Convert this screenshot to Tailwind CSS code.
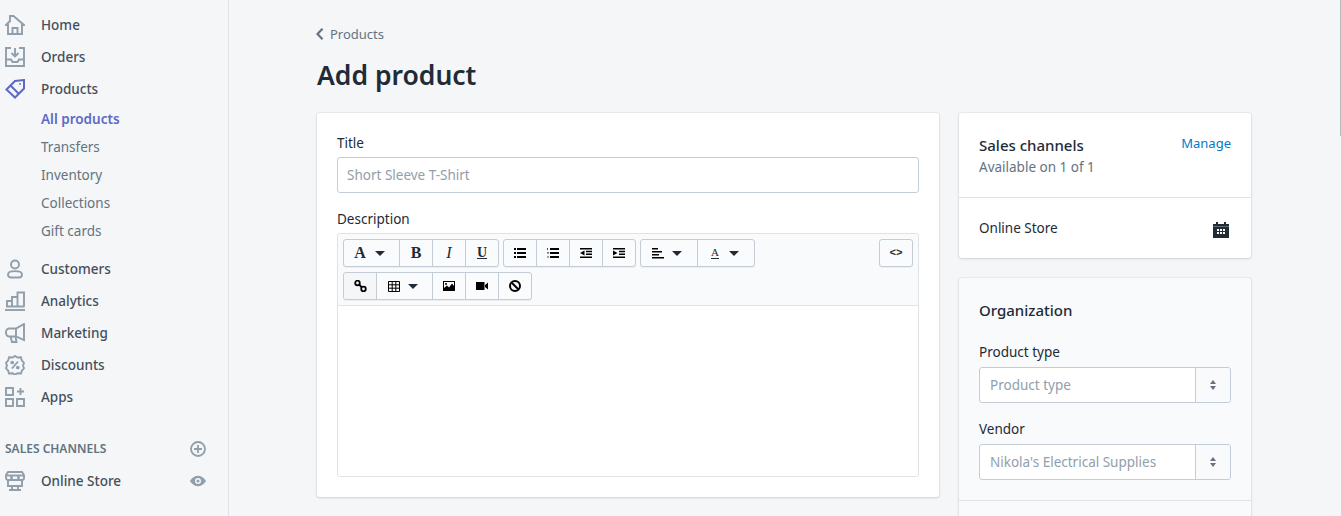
<!DOCTYPE html>
<html lang="en">
<head>
    <meta charset="UTF-8">
    <meta name="viewport" content="width=device-width, initial-scale=1.0">
    <title>Add product</title>
    <script src="https://cdn.jsdelivr.net/npm/@tailwindcss/browser@4"></script>
</head>
<body class="h-[516px] overflow-hidden bg-[#f4f6f8] text-[#212b36] font-['Noto_Sans','Open_Sans',sans-serif] text-[13.5px] leading-[20px]">
<div class="flex h-[516px]">
    <!-- sidebar -->
    <aside class="w-[229px] shrink-0 border-r border-[#dfe3e8] pt-[9px] text-[#454f5b] font-medium">
        <a class="flex items-center h-[32px] pl-[5px]">
            <svg class="w-[20px] h-[20px] mr-[16px]" viewBox="0 0 20 20" fill="none" stroke="#919eab" stroke-width="1.900"><path d="M1 10 5 6V1h3.500L19 10h-2v9H3v-9Z"/><path d="M7.500 19v-6h5v6"/></svg>
            <span>Home</span>
        </a>
        <a class="flex items-center h-[32px] pl-[5px]">
            <svg class="w-[20px] h-[20px] mr-[16px]" viewBox="0 0 20 20" fill="none" stroke="#919eab" stroke-width="1.900"><path d="M6 1H1v18h18V1h-5"/><path d="M1 12.500h5l1.500 2.500h5l1.500-2.500h5"/><path d="M10 1v8.500M6.500 6l3.500 3.500L13.500 6"/></svg>
            <span>Orders</span>
        </a>
        <a class="flex items-center h-[32px] pl-[5px]">
            <svg class="w-[20px] h-[20px] mr-[16px]" viewBox="0 0 20 20" fill="none" stroke="#5c6ac4" stroke-width="2"><path d="M1.500 10.500 10 2l9-1v8.500L10 18.500Z"/><path d="m5.500 6.500 8 8"/><circle cx="15" cy="5" r=".5" fill="#5c6ac4" stroke-width="1"/></svg>
            <span>Products</span>
        </a>
        <div class="pl-[41px] text-[#637381] font-normal">
            <a class="flex items-center h-[28px] font-semibold text-[#5c6ac4]">All products</a>
            <a class="flex items-center h-[28px]">Transfers</a>
            <a class="flex items-center h-[28px]">Inventory</a>
            <a class="flex items-center h-[28px]">Collections</a>
            <a class="flex items-center h-[28px]">Gift cards</a>
        </div>
        <div class="pt-[8px]">
            <a class="flex items-center h-[32px] pl-[5px]">
                <svg class="w-[20px] h-[20px] mr-[16px]" viewBox="0 0 20 20" fill="none" stroke="#919eab" stroke-width="1.900"><circle cx="10" cy="5.500" r="4"/><path d="M3 15.500c0-4.500 14-4.500 14 0 0 2-1.500 3-3 3H6c-1.500 0-3-1-3-3Z"/></svg>
                <span>Customers</span>
            </a>
            <a class="flex items-center h-[32px] pl-[5px]">
                <svg class="w-[20px] h-[20px] mr-[16px]" viewBox="0 0 20 20" fill="none" stroke="#919eab" stroke-width="1.900"><path d="M0 19h20"/><path d="M2 15.500V10h5v5.500M7 15.500V6h5.500v9.500M12.500 15.500V1.500H19v14M1 15.500h18.500"/></svg>
                <span>Analytics</span>
            </a>
            <a class="flex items-center h-[32px] pl-[5px]">
                <svg class="w-[20px] h-[20px] mr-[16px]" viewBox="0 0 20 20" fill="none" stroke="#919eab" stroke-width="1.900"><path d="M19 1v16l-8-3.500H4C2 13.500 1 11.500 1 9.500s1-4 3-4h7Z"/><path d="M11 5.500v8M5.500 13.500 7 19h4.500l-1-5.500"/></svg>
                <span>Marketing</span>
            </a>
            <a class="flex items-center h-[32px] pl-[5px]">
                <svg class="w-[20px] h-[20px] mr-[16px]" viewBox="0 0 20 20" fill="none" stroke="#919eab" stroke-width="1.900"><path d="m10 1 2.500 1.500 3.500-.3.800 3.200L19 8l-1 2.500 1 2.800-2.200 2.400-.8 2.800-3.500-.2L10 19.500l-2.500-1.200-3.500.2-.8-2.800L1 13.300 2 10.500 1 8l2.200-2.600.8-3.200 3.500.3Z"/><path d="m7 13.500 6-7"/><circle cx="7.200" cy="7.500" r=".9"/><circle cx="12.800" cy="12.500" r=".9"/></svg>
                <span>Discounts</span>
            </a>
            <a class="flex items-center h-[32px] pl-[5px]">
                <svg class="w-[20px] h-[20px] mr-[16px]" viewBox="0 0 20 20" fill="none" stroke="#919eab" stroke-width="1.900"><path d="M1 1h7v7H1zM1 12h7v7H1zM12 12h7v7h-7zM15.500 1v7M12 4.500h7"/></svg>
                <span>Apps</span>
            </a>
        </div>
        <div class="flex items-center justify-between h-[20px] mt-[26px] pl-[5px] pr-[22px] text-[12px] font-semibold text-[#637381]">
            <span>SALES CHANNELS</span>
            <svg class="w-[16px] h-[16px]" viewBox="0 0 16 16" fill="none" stroke="#919eab" stroke-width="1.800"><circle cx="8" cy="8" r="7"/><path d="M8 4v8M4 8h8"/></svg>
        </div>
        <a class="flex items-center h-[32px] mt-[6px] pl-[5px] pr-[22px]">
            <svg class="w-[20px] h-[20px] mr-[16px]" viewBox="0 0 20 20" fill="none" stroke="#919eab" stroke-width="1.900"><path d="M3 1h14l2 3v3c0 1-1 2-2 2H3C2 9 1 8 1 7V4Z"/><path d="M1 4.500h18"/><path d="M6.500 4.500V9M13.500 4.500V9" stroke-width="2.500"/><path d="M3 9v6h14V9M7 15v4M13 15v4M4 19h12"/></svg>
            <span class="flex-1">Online Store</span>
            <svg class="w-[16px] h-[16px]" viewBox="0 0 16 16"><path fill="#919eab" fill-rule="evenodd" d="M8 2.800c4 0 7 3.500 8 5.200-1 1.700-4 5.200-8 5.200S1 9.700 0 8c1-1.700 4-5.200 8-5.200ZM8 5a3 3 0 1 0 0 6 3 3 0 0 0 0-6Z"/><circle cx="8" cy="8" r="1.500" fill="#919eab"/></svg>
        </a>
    </aside>

    <!-- main -->
    <main class="flex-1 pl-[88px]">
        <a class="flex items-center h-[20px] mt-[24px] text-[13px] text-[#637381]">
            <svg class="w-[8px] h-[12px] mr-[6px] -ml-px" viewBox="0 0 8 12" fill="none" stroke="#637381" stroke-width="2.200"><path d="M6.500 .8 1.500 6l5 5.200"/></svg>
            <span>Products</span>
        </a>
        <h1 class="h-[36px] mt-[13px] text-[26.500px] leading-[36px] font-semibold text-[#212b36]">Add product</h1>

        <div class="flex items-start gap-[20px] mt-[20px]">
            <!-- left card -->
            <section class="w-[622px] h-[384px] shrink-0 rounded-[3px] bg-white px-[20px] pt-[20px] shadow-[0_0_0_1px_rgba(63,63,68,0.05),0_1px_3px_0_rgba(63,63,68,0.15)]">
                <label class="block h-[20px] mb-[4px]">Title</label>
                <div class="flex items-center h-[36px] px-[9px] rounded-[3px] border border-[#c4cdd5] bg-white text-[#919eab]">Short Sleeve T-Shirt</div>
                <label class="block h-[20px] mt-[16px] mb-[4px]">Description</label>
                <div class="h-[244px] rounded-[3px] border border-[#dfe3e8]">
                    <div class="flex justify-between h-[72px] bg-[#f9fafb] border-b border-[#dfe3e8] pl-[5px] pr-[5px] pt-[5px] rounded-t-[3px]">
                        <div class="flex flex-col gap-[5px]">
                            <div class="flex gap-[4px]">
                                <div class="flex h-[28px] rounded-[3px] border border-[#c4cdd5] bg-[#fafbfc] shadow-[0_1px_0_rgba(22,29,37,0.05)]">
                                    <span class="flex items-center justify-center gap-[9px] w-[56px] pr-[4px] border-r border-[#c4cdd5] font-['Liberation_Serif',serif] font-bold text-[16px] text-[#212b36]">A<i class="w-0 h-0 border-x-[5px] border-x-transparent border-t-[5px] border-t-[#212b36]"></i></span>
                                    <span class="flex items-center justify-center w-[33px] border-r border-[#c4cdd5] font-['Liberation_Serif',serif] font-bold text-[16px] text-[#212b36]">B</span>
                                    <span class="flex items-center justify-center w-[33px] border-r border-[#c4cdd5] font-['Liberation_Serif',serif] italic text-[16px] text-[#212b36]">I</span>
                                    <span class="flex items-center justify-center w-[32px] font-['Liberation_Serif',serif] font-bold underline text-[14px] text-[#212b36]">U</span>
                                </div>
                                <div class="flex h-[28px] rounded-[3px] border border-[#c4cdd5] bg-[#fafbfc] shadow-[0_1px_0_rgba(22,29,37,0.05)]">
                                    <span class="flex items-center justify-center w-[33px] border-r border-[#c4cdd5]">
                                        <svg class="w-[12px] h-[10px]" viewBox="0 0 12 10"><path d="M0 0h2v2H0zM0 4h2v2H0zM0 8h2v2H0zM3 0h9v2H3zM3 4h9v2H3zM3 8h9v2H3z"/></svg>
                                    </span>
                                    <span class="flex items-center justify-center w-[33px] border-r border-[#c4cdd5]">
                                        <svg class="w-[12px] h-[10px]" viewBox="0 0 12 10"><path d="M3 0h9v2H3zM3 4h9v2H3zM3 8h9v2H3z"/><path d="M0 0h1v2H0zM0 4h2v.7H0zM0 5.500h2v.6H0zM0 8h2v.6H0zM0 9.400h2v.6H0z" opacity=".7"/></svg>
                                    </span>
                                    <span class="flex items-center justify-center w-[33px] border-r border-[#c4cdd5]">
                                        <svg class="w-[12px] h-[10px]" viewBox="0 0 12 10"><path d="M0 0h12v1.500H0zM6 2.800h6v1.500H6zM6 5.600h6v1.500H6zM0 8.500h12V10H0zM4.500 2.500v5L0 5Z"/></svg>
                                    </span>
                                    <span class="flex items-center justify-center w-[32px]">
                                        <svg class="w-[12px] h-[10px]" viewBox="0 0 12 10"><path d="M0 0h12v1.500H0zM6 2.800h6v1.500H6zM6 5.600h6v1.500H6zM0 8.500h12V10H0zM0 2.500v5L4.500 5Z"/></svg>
                                    </span>
                                </div>
                                <div class="flex h-[28px] rounded-[3px] border border-[#c4cdd5] bg-[#fafbfc] shadow-[0_1px_0_rgba(22,29,37,0.05)]">
                                    <span class="flex items-center justify-center gap-[8px] w-[57px] pr-[4px] border-r border-[#c4cdd5]">
                                        <svg class="w-[12px] h-[11px]" viewBox="0 0 12 11"><path d="M0 0h6v1.500H0zM0 3h10v1.500H0zM0 6h7v1.500H0zM0 9h12v1.500H0z"/></svg>
                                        <i class="w-0 h-0 border-x-[5px] border-x-transparent border-t-[5px] border-t-[#212b36]"></i>
                                    </span>
                                    <span class="flex items-center justify-center gap-[10px] w-[56px] pr-[2px]">
                                        <span class="font-['Liberation_Serif',serif] text-[11px] leading-[11px] border-b border-[#212b36] text-[#212b36]">A</span>
                                        <i class="w-0 h-0 border-x-[5px] border-x-transparent border-t-[5px] border-t-[#212b36]"></i>
                                    </span>
                                </div>
                            </div>
                            <div class="flex h-[28px] w-[189px] rounded-[3px] border border-[#c4cdd5] bg-[#fafbfc] shadow-[0_1px_0_rgba(22,29,37,0.05)]">
                                <span class="flex items-center justify-center w-[33px] border-r border-[#c4cdd5] bg-[#f4f6f8] rounded-l-[3px]">
                                    <svg class="w-[13px] h-[12px]" viewBox="0 0 13 12" fill="none" stroke="#000" stroke-width="1.800"><circle cx="3.500" cy="3" r="2.300"/><circle cx="9.500" cy="9" r="2.300"/><path d="m5 4.500 3 3"/></svg>
                                </span>
                                <span class="flex items-center justify-center gap-[8px] w-[56px] pr-[4px] border-r border-[#c4cdd5]">
                                    <svg class="w-[12px] h-[11px]" viewBox="0 0 12 11" fill="none" stroke="#000"><path d="M.5.500h11v10H.5zM.5 3.800h11M.5 7.200h11M4.200.500v10M7.800.500v10"/></svg>
                                    <i class="w-0 h-0 border-x-[5px] border-x-transparent border-t-[5px] border-t-[#212b36]"></i>
                                </span>
                                <span class="flex items-center justify-center w-[33px] border-r border-[#c4cdd5]">
                                    <svg class="w-[12px] h-[10px]" viewBox="0 0 12 10"><path fill-rule="evenodd" d="M0 0h12v10H0Zm1 1v6l3-2.500L6 6.500l3-4L11 5V1Z"/><circle cx="3" cy="3" r="1"/></svg>
                                </span>
                                <span class="flex items-center justify-center w-[33px] border-r border-[#c4cdd5]">
                                    <svg class="w-[12px] h-[8px]" viewBox="0 0 12 8"><path d="M0 0h8.500v8H0zM9 3l3-2.500v7L9 5Z"/></svg>
                                </span>
                                <span class="flex items-center justify-center w-[32px]">
                                    <svg class="w-[12px] h-[12px]" viewBox="0 0 12 12" fill="none" stroke="#000" stroke-width="2"><circle cx="6" cy="6" r="5"/><path d="m2.500 2.500 7 7"/></svg>
                                </span>
                            </div>
                        </div>
                        <div class="flex items-center justify-center w-[34px] h-[28px] rounded-[3px] border border-[#c4cdd5] bg-[#fafbfc] shadow-[0_1px_0_rgba(22,29,37,0.05)] font-['Liberation_Mono',monospace] font-bold text-[11px] text-[#212b36]">&lt;&gt;</div>
                    </div>
                </div>
            </section>

            <!-- right column -->
            <div class="w-[292px] shrink-0 flex flex-col gap-[20px]">
                <section class="h-[145px] rounded-[3px] bg-white shadow-[0_0_0_1px_rgba(63,63,68,0.05),0_1px_3px_0_rgba(63,63,68,0.15)]">
                    <div class="flex justify-between h-[85px] px-[20px] pt-[20px] border-b border-[#dfe3e8]">
                        <div>
                            <h2 class="h-[24px] text-[15px] leading-[24px] font-medium text-[#212b36]">Sales channels</h2>
                            <p class="text-[#637381]">Available on 1 of 1</p>
                        </div>
                        <a class="text-[13px] text-[#007ace]">Manage</a>
                    </div>
                    <div class="flex items-center justify-between h-[60px] pl-[20px] pr-[22px]">
                        <span>Online Store</span>
                        <svg class="w-[16px] h-[16px] mt-[4px]" viewBox="0 0 16 16"><path fill="#212b36" fill-rule="evenodd" d="M3 0h2v2h6V0h2v2h3v14H0V2h3Z"/><path fill="#fff" d="M0 4h16v1H0z" opacity=".3"/><path fill="#fff" d="M4 7h2v2H4zM7 7h2v2H7zM10 7h2v2h-2zM4 10h2v2H4zM7 10h2v2H7zM10 10h2v2h-2z"/></svg>
                    </div>
                </section>
                <section class="h-[238px] rounded-t-[3px] bg-[#f9fafb] shadow-[0_0_0_1px_rgba(63,63,68,0.05),0_1px_3px_0_rgba(63,63,68,0.15)]">
                    <div class="h-[223px] px-[20px] pt-[20px] border-b border-[#dfe3e8]">
                        <h2 class="h-[24px] text-[15px] leading-[24px] font-medium text-[#212b36]">Organization</h2>
                        <label class="block h-[20px] mt-[20px] mb-[5px]">Product type</label>
                        <div class="flex h-[36px] rounded-[3px] border border-[#c4cdd5] bg-white">
                            <span class="flex-1 flex items-center px-[10px] text-[#919eab]">Product type</span>
                            <span class="flex flex-col items-center justify-center gap-[2px] w-[35px] border-l border-[#c4cdd5] bg-[#f9fafb] rounded-r-[3px]">
                                <i class="w-0 h-0 border-x-[3px] border-x-transparent border-b-[4px] border-b-[#637381]"></i>
                                <i class="w-0 h-0 border-x-[3px] border-x-transparent border-t-[4px] border-t-[#637381]"></i>
                            </span>
                        </div>
                        <label class="block h-[20px] mt-[16px] mb-[5px]">Vendor</label>
                        <div class="flex h-[36px] rounded-[3px] border border-[#c4cdd5] bg-white">
                            <span class="flex-1 flex items-center px-[10px] text-[#919eab]">Nikola's Electrical Supplies</span>
                            <span class="flex flex-col items-center justify-center gap-[2px] w-[35px] border-l border-[#c4cdd5] bg-[#f9fafb] rounded-r-[3px]">
                                <i class="w-0 h-0 border-x-[3px] border-x-transparent border-b-[4px] border-b-[#637381]"></i>
                                <i class="w-0 h-0 border-x-[3px] border-x-transparent border-t-[4px] border-t-[#637381]"></i>
                            </span>
                        </div>
                    </div>
                </section>
            </div>
        </div>
    </main>

    <!-- scrollbar thumb -->
    <div class="w-px shrink-0">
        <div class="h-[136px] bg-[#b8b8b8]"></div>
    </div>
</div>
</body>
</html>
